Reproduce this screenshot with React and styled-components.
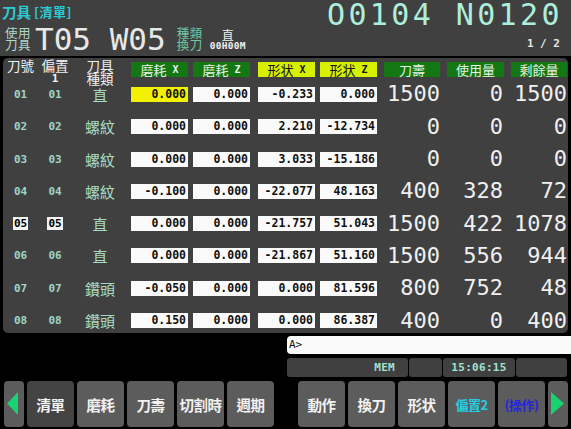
import styled, { createGlobalStyle } from "styled-components";

const MONO = `"DejaVu Sans Mono", "Liberation Mono", monospace`;
const CJK = `"Noto Sans CJK TC", "Noto Sans", sans-serif`;

const GlobalStyle = createGlobalStyle`
  html, body {
    margin: 0;
    padding: 0;
    background: #000;
  }
`;

const Screen = styled.div`
  width: 571px;
  height: 429px;
  background: #000;
  overflow: hidden;
  display: flex;
  flex-direction: column;
  font-family: ${CJK};
`;

/* ---------- header ---------- */

const Header = styled.header`
  height: 56px;
  flex: none;
  background: #404040;
  display: flex;
  justify-content: space-between;
  padding: 0 11px 0 2px;
  box-sizing: border-box;
`;

const HeadLeft = styled.div`
  display: flex;
  flex-direction: column;
`;

const Title = styled.div`
  margin-top: 3px;
  height: 17px;
  display: flex;
  align-items: center;
  gap: 3px;
  color: #2ccad2;
  font-weight: 700;
  font-size: 14.5px;
  line-height: 17px;
`;

const TitleTag = styled.span`
  font-size: 13px;
  letter-spacing: 0.5px;
`;

const InfoRow = styled.div`
  margin-top: 6px;
  display: flex;
  align-items: center;
`;

const StackLabel = styled.div`
  display: flex;
  flex-direction: column;
  font-size: 12.5px;
  line-height: 12.5px;
  letter-spacing: 0.5px;
  color: ${(p) => p.$color};
  margin-left: ${(p) => p.$left || 0}px;
`;

const ToolNo = styled.div`
  font-family: ${MONO};
  font-size: 31px;
  line-height: 26px;
  color: #e8e8e8;
  margin-left: 4px;
  white-space: pre;
`;

const TypeBlock = styled.div`
  margin-left: 7px;
  display: flex;
  flex-direction: column;
  align-items: center;
  color: #f0f0f0;
`;

const TypeChar = styled.span`
  font-size: 12px;
  line-height: 13px;
`;

const ChangeTime = styled.span`
  font-family: ${MONO};
  font-weight: 700;
  font-size: 9.5px;
  line-height: 10px;
  letter-spacing: 0.3px;
`;

const HeadRight = styled.div`
  display: flex;
  flex-direction: column;
  align-items: flex-end;
`;

const ProgNo = styled.div`
  font-family: ${MONO};
  font-size: 30px;
  line-height: 30px;
  letter-spacing: 3.4px;
  margin-right: -3px;
  color: #aeeedb;
  white-space: pre;
`;

const PageNo = styled.div`
  margin-top: 8px;
  font-family: ${MONO};
  font-weight: 700;
  font-size: 11px;
  line-height: 11px;
  color: #e8e8e8;
  white-space: pre;
`;

/* ---------- offset table ---------- */

const Panel = styled.section`
  margin: 2px 3px 0;
  height: 275px;
  flex: none;
  background: #404040;
  border-radius: 5px;
  overflow: hidden;
  display: grid;
  grid-template-columns: 35px 34px 56px 60px 62px 65px 62px 63px 64px 63px;
  grid-template-rows: 20.35px repeat(8, 32.3px);
  align-items: center;
`;

const ColLabel = styled.div`
  align-self: start;
  justify-self: center;
  margin-top: 1px;
  display: flex;
  flex-direction: column;
  align-items: center;
  color: #f2f2f2;
  font-size: 13.5px;
  line-height: 13px;
  white-space: nowrap;
`;

const SubNo = styled.span`
  font-family: ${MONO};
  font-weight: 700;
  font-size: 11px;
  line-height: 12px;
  margin-top: 1px;
`;

const HeadBox = styled.div`
  align-self: end;
  justify-self: end;
  margin-bottom: 1px;
  width: ${(p) => p.$w || 57}px;
  height: 15px;
  display: flex;
  align-items: center;
  justify-content: center;
  gap: 6px;
  background: ${(p) => (p.$shape ? "#d6f000" : "#137813")};
  color: ${(p) => (p.$shape ? "#141414" : "#e6f2e6")};
  font-size: 13px;
  line-height: 1;
  white-space: nowrap;
`;

const Axis = styled.span`
  font-family: ${MONO};
  font-weight: 700;
  font-size: 10px;
`;

const IdCell = styled.div`
  justify-self: center;
  font-family: ${MONO};
  font-weight: 700;
  font-size: 11px;
  line-height: 13px;
  padding: 0 1px;
  color: ${(p) => (p.$cursor ? "#000" : "#9fd6c6")};
  background: ${(p) => (p.$cursor ? "#f4f4f4" : "transparent")};
`;

const TypeCell = styled.div`
  justify-self: center;
  font-size: 15px;
  line-height: 1;
  color: #a6dcc6;
`;

const ValueBox = styled.div`
  justify-self: end;
  width: 57px;
  height: 15px;
  box-sizing: border-box;
  padding-right: 2px;
  background: ${(p) => (p.$active ? "#f2f200" : "#fafafa")};
  color: #111;
  font-family: ${MONO};
  font-weight: 700;
  font-size: 11.5px;
  line-height: 15px;
  text-align: right;
`;

const BigNum = styled.div`
  justify-self: end;
  font-family: ${MONO};
  font-size: 22px;
  line-height: 1;
  color: #f0f0f0;
  margin-right: ${(p) => p.$mr || 0}px;
`;

/* ---------- command line, status and soft keys ---------- */

const Console = styled.div`
  margin-top: 3px;
  display: grid;
  grid-template-columns: 1fr 284px;
  grid-template-rows: 18px 19px 46px;
  row-gap: 4px;
`;

const InputLine = styled.div`
  grid-column: 2;
  background: #fafafa;
  border-radius: 4px 0 0 4px;
  padding-left: 2px;
  font-family: ${MONO};
  font-size: 11px;
  line-height: 18px;
  color: #111;
`;

const StatusBar = styled.div`
  grid-column: 2;
  display: grid;
  grid-template-columns: 121px 33px 72px 51px;
  column-gap: 1px;
`;

const StatusCell = styled.div`
  background: #404040;
  border-radius: 3px;
  display: flex;
  align-items: center;
  justify-content: ${(p) => p.$align || "center"};
  padding-right: ${(p) => p.$pr || 0}px;
  font-family: ${MONO};
  font-weight: 700;
  font-size: 11px;
  color: #a2e2cf;
  letter-spacing: 0.3px;
`;

const KeyRow = styled.div`
  grid-column: 1 / -1;
  display: flex;
  gap: 3px;
  padding-left: 4px;
`;

const SoftKey = styled.button`
  width: ${(p) => p.$w || 47}px;
  height: 46px;
  flex: none;
  border: none;
  border-radius: 4px;
  padding: 0;
  background: ${(p) => (p.$on ? "#444" : "#5c5c5c")};
  color: ${(p) => p.$color || "#f2f2f2"};
  font-family: ${CJK};
  font-weight: 700;
  font-size: ${(p) => p.$size || 14.5}px;
  letter-spacing: -0.5px;
  white-space: nowrap;
  display: flex;
  align-items: center;
  justify-content: center;
`;

const KeyGap = styled.div`
  width: 18px;
  flex: none;
`;

const Arrow = ({ dir }) => (
  <svg width="20" height="46" viewBox="0 0 20 46">
    {dir === "left" ? (
      <polygon points="3,22.5 14,11 14,34" fill="#19d271" />
    ) : (
      <polygon points="16,22.5 3,11 3,34" fill="#19d271" />
    )}
  </svg>
);

const rows = [
  { no: "01", type: "直", wx: "0.000", wz: "0.000", gx: "-0.233", gz: "0.000", life: "1500", used: "0", left: "1500", active: true },
  { no: "02", type: "螺紋", wx: "0.000", wz: "0.000", gx: "2.210", gz: "-12.734", life: "0", used: "0", left: "0" },
  { no: "03", type: "螺紋", wx: "0.000", wz: "0.000", gx: "3.033", gz: "-15.186", life: "0", used: "0", left: "0" },
  { no: "04", type: "螺紋", wx: "-0.100", wz: "0.000", gx: "-22.077", gz: "48.163", life: "400", used: "328", left: "72" },
  { no: "05", type: "直", wx: "0.000", wz: "0.000", gx: "-21.757", gz: "51.043", life: "1500", used: "422", left: "1078", cursor: true },
  { no: "06", type: "直", wx: "0.000", wz: "0.000", gx: "-21.867", gz: "51.160", life: "1500", used: "556", left: "944" },
  { no: "07", type: "鑽頭", wx: "-0.050", wz: "0.000", gx: "0.000", gz: "81.596", life: "800", used: "752", left: "48" },
  { no: "08", type: "鑽頭", wx: "0.150", wz: "0.000", gx: "0.000", gz: "86.387", life: "400", used: "0", left: "400" },
];

const leftKeys = ["清單", "磨耗", "刀壽", "切割時", "週期"];

export default function App() {
  return (
    <Screen>
      <GlobalStyle />
      <Header>
        <HeadLeft>
          <Title>
            刀具<TitleTag>[清單]</TitleTag>
          </Title>
          <InfoRow>
            <StackLabel $color="#b2d8ca" $left={3}>
              <span>使用</span>
              <span>刀具</span>
            </StackLabel>
            <ToolNo>T05 W05</ToolNo>
            <StackLabel $color="#6ccaa4" $left={11}>
              <span>種類</span>
              <span>換刀</span>
            </StackLabel>
            <TypeBlock>
              <TypeChar>直</TypeChar>
              <ChangeTime>00H00M</ChangeTime>
            </TypeBlock>
          </InfoRow>
        </HeadLeft>
        <HeadRight>
          <ProgNo>O0104 N0120</ProgNo>
          <PageNo>1 / 2</PageNo>
        </HeadRight>
      </Header>

      <Panel>
        <ColLabel>刀號</ColLabel>
        <ColLabel>
          <span>偏置</span>
          <SubNo>1</SubNo>
        </ColLabel>
        <ColLabel>
          <span>刀具</span>
          <span>種類</span>
        </ColLabel>
        <HeadBox>磨耗<Axis>X</Axis></HeadBox>
        <HeadBox>磨耗<Axis>Z</Axis></HeadBox>
        <HeadBox $shape>形状<Axis>X</Axis></HeadBox>
        <HeadBox $shape>形状<Axis>Z</Axis></HeadBox>
        <HeadBox $w={56}>刀壽</HeadBox>
        <HeadBox>使用量</HeadBox>
        <HeadBox $w={56}>剩餘量</HeadBox>

        {rows.map((r) => [
          <IdCell key={r.no + "t"} $cursor={r.cursor}>{r.no}</IdCell>,
          <IdCell key={r.no + "o"} $cursor={r.cursor}>{r.no}</IdCell>,
          <TypeCell key={r.no + "k"}>{r.type}</TypeCell>,
          <ValueBox key={r.no + "wx"} $active={r.active}>{r.wx}</ValueBox>,
          <ValueBox key={r.no + "wz"}>{r.wz}</ValueBox>,
          <ValueBox key={r.no + "gx"}>{r.gx}</ValueBox>,
          <ValueBox key={r.no + "gz"}>{r.gz}</ValueBox>,
          <BigNum key={r.no + "l"}>{r.life}</BigNum>,
          <BigNum key={r.no + "u"} $mr={1}>{r.used}</BigNum>,
          <BigNum key={r.no + "r"}>{r.left}</BigNum>,
        ])}
      </Panel>

      <Console>
        <InputLine>A&gt;</InputLine>
        <StatusBar>
          <StatusCell $align="flex-end" $pr={13}>MEM</StatusCell>
          <StatusCell />
          <StatusCell>15:06:15</StatusCell>
          <StatusCell />
        </StatusBar>
        <KeyRow>
          <SoftKey $w={20}>
            <Arrow dir="left" />
          </SoftKey>
          {leftKeys.map((k, i) => (
            <SoftKey key={k} $on={i === 0}>{k}</SoftKey>
          ))}
          <KeyGap />
          <SoftKey>動作</SoftKey>
          <SoftKey>換刀</SoftKey>
          <SoftKey>形状</SoftKey>
          <SoftKey $color="#22cfe0" $size={13}>偏置2</SoftKey>
          <SoftKey $color="#2424dc" $size={13}>(操作)</SoftKey>
          <SoftKey $w={20}>
            <Arrow dir="right" />
          </SoftKey>
        </KeyRow>
      </Console>
    </Screen>
  );
}
